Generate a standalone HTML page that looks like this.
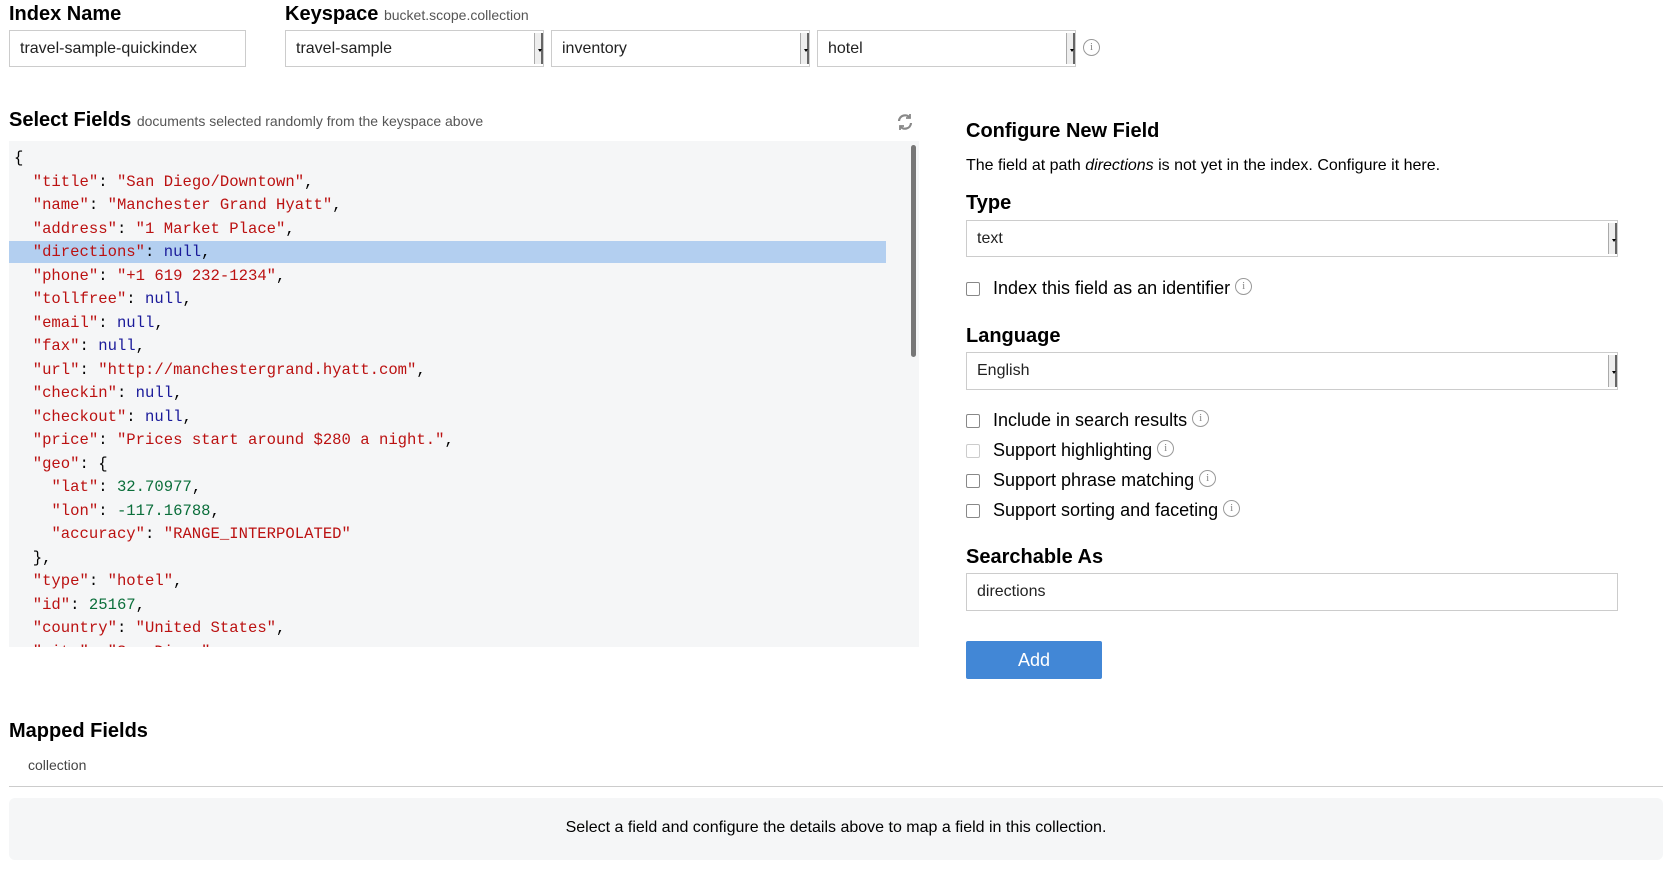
<!DOCTYPE html>
<html><head><meta charset="utf-8"><style>
*{box-sizing:border-box;margin:0;padding:0}
body{width:1666px;height:869px;background:#fff;font-family:"Liberation Sans",sans-serif;color:#000;position:relative;overflow:hidden}
.a{position:absolute}
.h{font-weight:bold;font-size:20px;white-space:nowrap}
.sm{font-size:14px;font-weight:normal;color:#555}
.inp{position:absolute;border:1px solid #ccc;background:#fff;font-size:16px;padding-left:10px;display:flex;align-items:center;color:#222}
.sel::after{content:"";position:absolute;right:0;top:2px;bottom:2px;width:6px;border-left:1px solid #aaa;border-right:2px solid #666;background:#eee}
.sel::before{content:"";position:absolute;right:1px;top:50%;border:2px solid transparent;border-top:3px solid #000;z-index:2}
.info{display:inline-block;width:17px;height:17px;border:1px solid #999;border-radius:50%;font:11px "Liberation Serif",serif;color:#888;text-align:center;line-height:15px;vertical-align:top;margin-left:5px;margin-top:-4px}
.row{position:absolute;left:966px;display:flex;align-items:center;font-size:18px;white-space:nowrap}
.cb{width:14px;height:14px;border:1px solid #888;border-radius:2px;background:#fff;margin-right:13px}
pre{font-family:"Liberation Mono",monospace;font-size:15.6px;line-height:23.5px;color:#000}
.k{color:#b11}.s{color:#b11}.n{color:#1a1a9a}.d{color:#0a6e3a}
</style></head><body>
<div class="a h" style="left:9px;top:3px">Index Name</div>
<div class="inp" style="left:9px;top:30px;width:237px;height:37px">travel-sample-quickindex</div>
<div class="a h" style="left:285px;top:3px">Keyspace <span class="sm">bucket.scope.collection</span></div>
<div class="inp sel" style="left:285px;top:30px;width:259px;height:37px">travel-sample</div>
<div class="inp sel" style="left:551px;top:30px;width:259px;height:37px">inventory</div>
<div class="inp sel" style="left:817px;top:30px;width:259px;height:37px">hotel</div>
<div class="info a" style="left:1083px;top:39px;margin:0">i</div>

<div class="a h" style="left:9px;top:109px">Select Fields <span class="sm">documents selected randomly from the keyspace above</span></div>
<svg class="a" style="left:896px;top:113px" width="18" height="18" viewBox="0 0 18 18" fill="none" stroke="#888" stroke-width="2.2"><path d="M3 8a6 6 0 0 1 11-3"/><path d="M15 10a6 6 0 0 1-11 3"/><path d="M14 1v4h-4M4 17v-4h4" stroke-width="1.8"/></svg>
<div class="a" style="left:9px;top:141px;width:910px;height:506px;background:#f5f6f7;overflow:hidden">
<div class="a" style="left:0;top:100px;width:877px;height:22px;background:#b3cff0"></div>
<div class="a" style="left:902px;top:4px;width:5px;height:212px;background:#777;border-radius:3px"></div>
<pre class="a" style="left:5px;top:6px">{
  <span class="k">"title"</span>: <span class="s">"San Diego/Downtown"</span>,
  <span class="k">"name"</span>: <span class="s">"Manchester Grand Hyatt"</span>,
  <span class="k">"address"</span>: <span class="s">"1 Market Place"</span>,
  <span class="k">"directions"</span>: <span class="n">null</span>,
  <span class="k">"phone"</span>: <span class="s">"+1 619 232-1234"</span>,
  <span class="k">"tollfree"</span>: <span class="n">null</span>,
  <span class="k">"email"</span>: <span class="n">null</span>,
  <span class="k">"fax"</span>: <span class="n">null</span>,
  <span class="k">"url"</span>: <span class="s">"http://manchestergrand.hyatt.com"</span>,
  <span class="k">"checkin"</span>: <span class="n">null</span>,
  <span class="k">"checkout"</span>: <span class="n">null</span>,
  <span class="k">"price"</span>: <span class="s">"Prices start around $280 a night."</span>,
  <span class="k">"geo"</span>: {
    <span class="k">"lat"</span>: <span class="d">32.70977</span>,
    <span class="k">"lon"</span>: <span class="d">-117.16788</span>,
    <span class="k">"accuracy"</span>: <span class="s">"RANGE_INTERPOLATED"</span>
  },
  <span class="k">"type"</span>: <span class="s">"hotel"</span>,
  <span class="k">"id"</span>: <span class="d">25167</span>,
  <span class="k">"country"</span>: <span class="s">"United States"</span>,
  <span class="k">"city"</span>: <span class="s">"San Diego"</span>,</pre>
</div>

<div class="a h" style="left:966px;top:120px">Configure New Field</div>
<div class="a" style="left:966px;top:157px;font-size:16px">The field at path <i>directions</i> is not yet in the index. Configure it here.</div>
<div class="a h" style="left:966px;top:192px">Type</div>
<div class="inp sel" style="left:966px;top:220px;width:652px;height:37px">text</div>
<div class="row" style="top:278px"><div class="cb"></div>Index this field as an identifier<span class="info">i</span></div>
<div class="a h" style="left:966px;top:325px">Language</div>
<div class="inp sel" style="left:966px;top:352px;width:652px;height:38px">English</div>
<div class="row" style="top:410px"><div class="cb"></div>Include in search results<span class="info">i</span></div>
<div class="row" style="top:440px"><div class="cb" style="border-color:#ccc"></div>Support highlighting<span class="info">i</span></div>
<div class="row" style="top:470px"><div class="cb"></div>Support phrase matching<span class="info">i</span></div>
<div class="row" style="top:500px"><div class="cb"></div>Support sorting and faceting<span class="info">i</span></div>
<div class="a h" style="left:966px;top:546px">Searchable As</div>
<div class="inp" style="left:966px;top:573px;width:652px;height:38px">directions</div>
<div class="a" style="left:966px;top:641px;width:136px;height:38px;background:#4287d6;border-radius:2px;color:#fff;font-size:18px;text-align:center;line-height:38px">Add</div>

<div class="a h" style="left:9px;top:720px">Mapped Fields</div>
<div class="a" style="left:28px;top:757px;font-size:14px;color:#444">collection</div>
<div class="a" style="left:9px;top:786px;width:1654px;height:1px;background:#ccc"></div>
<div class="a" style="left:9px;top:798px;width:1654px;height:62px;background:#f5f6f7;border-radius:6px;font-size:16px;text-align:center;line-height:60px">Select a field and configure the details above to map a field in this collection.</div>
</body></html>
